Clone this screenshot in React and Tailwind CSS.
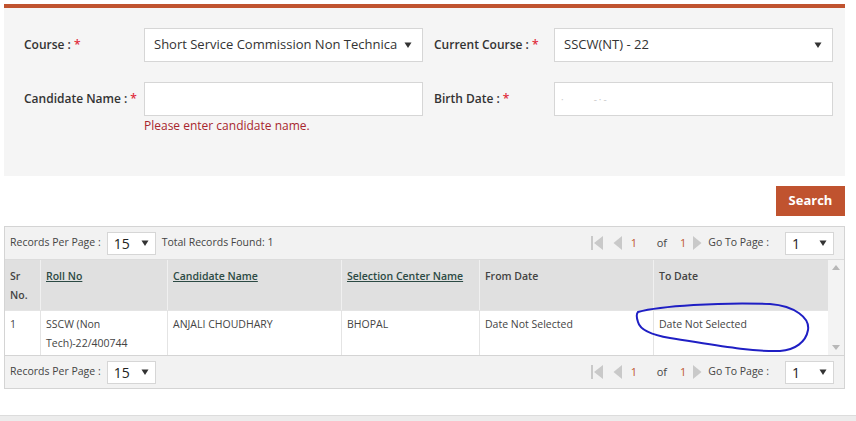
import React from 'react';

const Star = () => <span className="text-[#e02b3c] ml-[3px]">*</span>;

function Caret() {
  return (
    <svg width="8" height="8" viewBox="0 0 8 8" className="shrink-0">
      <path d="M0.5 1.5 L7.5 1.5 L4 7 Z" fill="#333" />
    </svg>
  );
}

function SelectBox({ value, className }) {
  return (
    <div className={`flex items-center justify-between bg-white border border-[#d6d6d6] ${className}`}>
      <span className="truncate">{value}</span>
      <Caret />
    </div>
  );
}

function Pager() {
  return (
    <div className="flex items-center text-[11px] text-[#444]">
      <svg width="14" height="16" viewBox="0 0 14 16" className="mr-[8px]">
        <rect x="0" y="1" width="2" height="14" fill="#c9c9c9" />
        <path d="M12 1 L3 8 L12 15 Z" fill="#c9c9c9" />
      </svg>
      <svg width="10" height="16" viewBox="0 0 10 16" className="mr-[8px]">
        <path d="M9 1 L0.5 8 L9 15 Z" fill="#c9c9c9" />
      </svg>
      <span className="text-[#c0562f] w-[10px]">1</span>
      <span className="ml-[16px]">of</span>
      <span className="text-[#c0562f] ml-[13px]">1</span>
      <svg width="10" height="16" viewBox="0 0 10 16" className="ml-[6px] mr-[6px]">
        <path d="M1 1 L9.5 8 L1 15 Z" fill="#c9c9c9" />
      </svg>
      <span className="text-[10.5px]">Go To Page :</span>
      <SelectBox value="1" className="ml-[16px] w-[49px] h-[23px] px-[6px] text-[14px] text-[#222]" />
    </div>
  );
}

function RecordsPerPage({ total }) {
  return (
    <div className="flex items-center text-[10.5px] text-[#444]">
      <span>Records Per Page :</span>
      <SelectBox value="15" className="ml-[6px] w-[49px] h-[23px] px-[6px] text-[14px] text-[#222]" />
      {total && <span className="ml-[6px]">Total Records Found: 1</span>}
    </div>
  );
}

export default function App() {
  const headers = [
    { label: <>Sr<br />No.</>, w: 'w-[35px]', link: false },
    { label: 'Roll No', w: 'w-[127px]', link: true },
    { label: 'Candidate Name', w: 'w-[174px]', link: true },
    { label: 'Selection Center Name', w: 'w-[138px]', link: true },
    { label: 'From Date', w: 'w-[174px]', link: false },
    { label: 'To Date', w: 'w-[175px]', link: false },
  ];
  const row = ['1', <>SSCW (Non<br />Tech)-22/400744</>, 'ANJALI CHOUDHARY', 'BHOPAL', 'Date Not Selected', 'Date Not Selected'];

  return (
    <div className="w-[856px] h-[421px] bg-white relative overflow-hidden font-['Open_Sans',sans-serif] text-[#333]">
      <div className="pl-[4px] pr-[11px] pt-[4px]">
        <div className="h-[4px] bg-[#c0532f]" />
        <div className="bg-[#f5f5f5] h-[168px] pt-[20px] pl-[20px] flex flex-col gap-[20px]">
          <div className="flex items-center h-[34px]">
            <div className="w-[120px] whitespace-nowrap text-[12px] font-semibold text-[#333]">Course :<Star /></div>
            <SelectBox value="Short Service Commission Non Technica" className="w-[279px] h-[34px] pl-[9px] pr-[10px] text-[13px] text-[#333]" />
            <div className="w-[120px] ml-[11px] whitespace-nowrap text-[12px] font-semibold text-[#333]">Current Course :<Star /></div>
            <SelectBox value="SSCW(NT) - 22" className="w-[279px] h-[34px] pl-[9px] pr-[10px] text-[13px] text-[#333]" />
          </div>
          <div className="flex items-start">
            <div className="w-[120px] h-[34px] flex items-center whitespace-nowrap text-[12px] font-semibold text-[#333]">Candidate Name :<Star /></div>
            <div className="w-[279px]">
              <div className="h-[34px] bg-white border border-[#d6d6d6]" />
              <div className="text-[12px] text-[#a8262e] mt-[1px]">Please enter candidate name.</div>
            </div>
            <div className="w-[120px] ml-[11px] h-[34px] flex items-center whitespace-nowrap text-[12px] font-semibold text-[#333]">Birth Date :<Star /></div>
            <div className="w-[279px] h-[34px] bg-white border border-[#d6d6d6] flex items-center pl-[6px] text-[10px] text-[#ccc]">
              <span>·</span>
              <span className="ml-[30px] tracking-[2px]">-·-</span>
            </div>
          </div>
        </div>

        <div className="flex justify-end mt-[10px]">
          <button className="w-[69px] h-[30px] bg-[#c0532f] text-white text-[13px] font-bold">Search</button>
        </div>

        <div className="mt-[10px] border border-[#d4d4d4]">
          <div className="h-[33px] bg-[#f2f2f2] flex items-center justify-between pl-[5px] pr-[10px] border-b border-[#dcdcdc]">
            <RecordsPerPage total />
            <Pager />
          </div>
          <div className="flex">
            <div className="flex-1">
              <div className="flex bg-[#e0e0e0] h-[50px]">
                {headers.map((h, i) => (
                  <div key={i} className={`${h.w} pl-[5px] pt-[7px] text-[10.5px] leading-[19px] font-semibold ${i > 0 ? 'border-l border-[#f0f0f0]' : ''} ${h.link ? 'underline text-[#2c4a44]' : 'text-[#444]'}`}>
                    {h.label}
                  </div>
                ))}
              </div>
              <div className="flex bg-white h-[45px] border-t border-[#e4e4e4]">
                {row.map((c, i) => (
                  <div key={i} className={`${headers[i].w} pl-[5px] pt-[4px] text-[10.5px] leading-[19px] text-[#444] ${i > 0 ? 'border-l border-[#e4e4e4]' : ''}`}>
                    {c}
                  </div>
                ))}
              </div>
            </div>
            <div className="w-[17px] bg-[#f3f3f3] flex flex-col justify-between items-center py-[5px]">
              <svg width="8" height="5" viewBox="0 0 8 5"><path d="M0 5 L4 0 L8 5 Z" fill="#b8b8b8" /></svg>
              <svg width="8" height="5" viewBox="0 0 8 5"><path d="M0 0 L4 5 L8 0 Z" fill="#b8b8b8" /></svg>
            </div>
          </div>
          <div className="h-[33px] bg-[#f2f2f2] flex items-center justify-between pl-[5px] pr-[10px] border-t border-[#d4d4d4]">
            <RecordsPerPage />
            <Pager />
          </div>
        </div>
      </div>

      <div className="absolute left-0 right-0 top-[415px] h-[6px] bg-[#ececec] border-t border-[#dcdcdc]" />

      <svg className="absolute left-[630px] top-[298px]" width="190" height="60" viewBox="0 0 190 60">
        <path
          d="M8 14 C 30 8, 90 4, 140 6 C 165 8, 180 20, 178 32 C 176 44, 165 52, 150 53 C 120 54, 80 46, 40 40 C 22 37, 10 32, 8 24 C 6 18, 7 15, 8 14"
          fill="none"
          stroke="#1f1fc4"
          strokeWidth="2"
          strokeLinecap="round"
        />
      </svg>
    </div>
  );
}
